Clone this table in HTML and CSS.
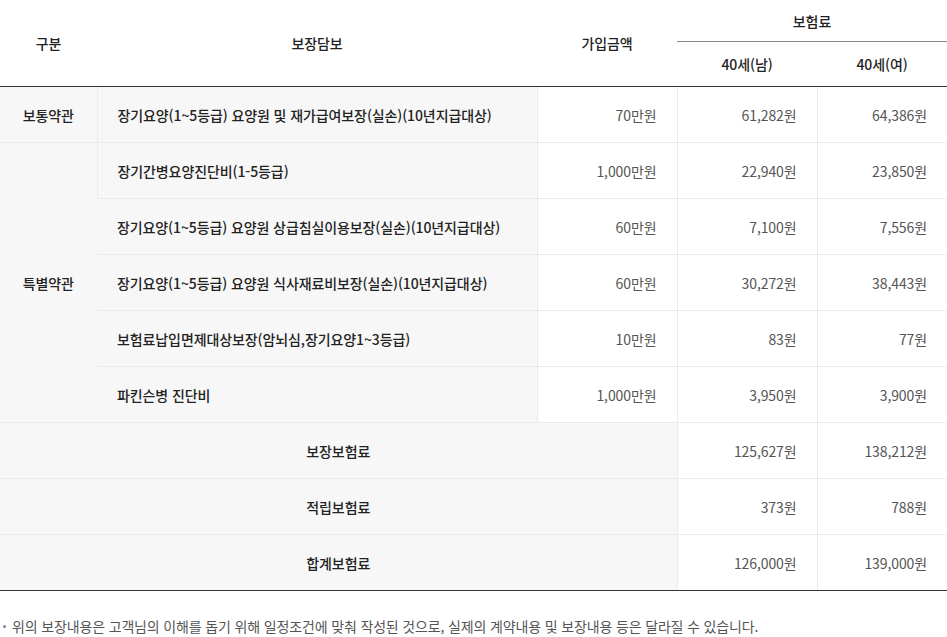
FILE: index.html
```html
<!DOCTYPE html>
<html lang="ko">
<head>
<meta charset="utf-8">
<link rel="stylesheet" href="styles.css">
</head>
<body>
<table class="prem">
  <colgroup>
    <col class="c1"><col class="c2"><col class="c3"><col class="c4"><col class="c5">
  </colgroup>
  <thead>
    <tr class="h1">
      <th rowspan="2">구분</th>
      <th rowspan="2">보장담보</th>
      <th rowspan="2">가입금액</th>
      <th colspan="2" class="grp">보험료</th>
    </tr>
    <tr class="h2">
      <th>40세(남)</th>
      <th>40세(여)</th>
    </tr>
  </thead>
  <tbody>
    <tr>
      <td class="kind">보통약관</td>
      <td class="name">장기요양(1~5등급) 요양원 및 재가급여보장(실손)(10년지급대상)</td>
      <td class="num">70만원</td>
      <td class="num">61,282원</td>
      <td class="num">64,386원</td>
    </tr>
    <tr>
      <td class="kind" rowspan="5">특별약관</td>
      <td class="name">장기간병요양진단비(1-5등급)</td>
      <td class="num">1,000만원</td>
      <td class="num">22,940원</td>
      <td class="num">23,850원</td>
    </tr>
    <tr>
      <td class="name">장기요양(1~5등급) 요양원 상급침실이용보장(실손)(10년지급대상)</td>
      <td class="num">60만원</td>
      <td class="num">7,100원</td>
      <td class="num">7,556원</td>
    </tr>
    <tr>
      <td class="name">장기요양(1~5등급) 요양원 식사재료비보장(실손)(10년지급대상)</td>
      <td class="num">60만원</td>
      <td class="num">30,272원</td>
      <td class="num">38,443원</td>
    </tr>
    <tr>
      <td class="name">보험료납입면제대상보장(암뇌심,장기요양1~3등급)</td>
      <td class="num">10만원</td>
      <td class="num">83원</td>
      <td class="num">77원</td>
    </tr>
    <tr>
      <td class="name">파킨슨병 진단비</td>
      <td class="num">1,000만원</td>
      <td class="num">3,950원</td>
      <td class="num">3,900원</td>
    </tr>
    <tr>
      <td class="sum" colspan="3">보장보험료</td>
      <td class="num">125,627원</td>
      <td class="num">138,212원</td>
    </tr>
    <tr>
      <td class="sum" colspan="3">적립보험료</td>
      <td class="num">373원</td>
      <td class="num">788원</td>
    </tr>
    <tr class="last">
      <td class="sum" colspan="3">합계보험료</td>
      <td class="num">126,000원</td>
      <td class="num">139,000원</td>
    </tr>
  </tbody>
</table>
<ul class="notes">
  <li>위의 보장내용은 고객님의 이해를 돕기 위해 일정조건에 맞춰 작성된 것으로, 실제의 계약내용 및 보장내용 등은 달라질 수 있습니다.</li>
</ul>
</body>
</html>
```
FILE: styles.css
```css
html, body {
  margin: 0;
  padding: 0;
  background: #fff;
}
body {
  font-family: "Noto Sans CJK KR", "Noto Sans", sans-serif;
  color: #333;
  font-size: 14px;
}
.prem {
  width: 947px;
  border-collapse: collapse;
  table-layout: fixed;
  letter-spacing: -0.1px;
}
.c1 { width: 97px; }
.c2 { width: 440px; }
.c3 { width: 140px; }
.c4 { width: 140px; }
.c5 { width: 130px; }

.prem th {
  font-weight: 500;
  color: #222;
  padding: 0;
  background: #fff;
}
.h1 th { height: 41px; }
.h2 th { height: 44px; }
.h1 .grp {
  border-bottom: 1px solid #8a8a8a;
}
.h2 th {
  border-bottom: 1px solid #333;
}
.h1 th[rowspan] {
  border-bottom: 1px solid #333;
}
.prem td {
  height: 55px;
  padding: 0 20px;
  border-bottom: 1px solid #ebebeb;
  border-left: 1px solid #ebebeb;
}
.prem td:first-child { border-left: 0; }
.prem .kind {
  background: #f7f7f7;
  text-align: center;
  font-weight: 500;
  color: #222;
  padding: 0;
}
.prem .name {
  background: #f7f7f7;
  font-weight: 500;
  color: #222;
}
.prem .num {
  text-align: right;
  color: #555;
}
.prem .sum {
  background: #f7f7f7;
  text-align: center;
  font-weight: 500;
  color: #222;
}
.prem tr.last td {
  border-bottom: 1px solid #333;
}
.notes {
  list-style: none;
  margin: 25px 0 0;
  padding: 0 0 0 12px;
  font-size: 14px;
  color: #555;
  letter-spacing: -0.15px;
}
.notes li {
  position: relative;
  line-height: 20px;
}
.notes li::before {
  content: "";
  position: absolute;
  left: -9px;
  top: 9px;
  width: 3px;
  height: 3px;
  border-radius: 50%;
  background: #888;
}
```
